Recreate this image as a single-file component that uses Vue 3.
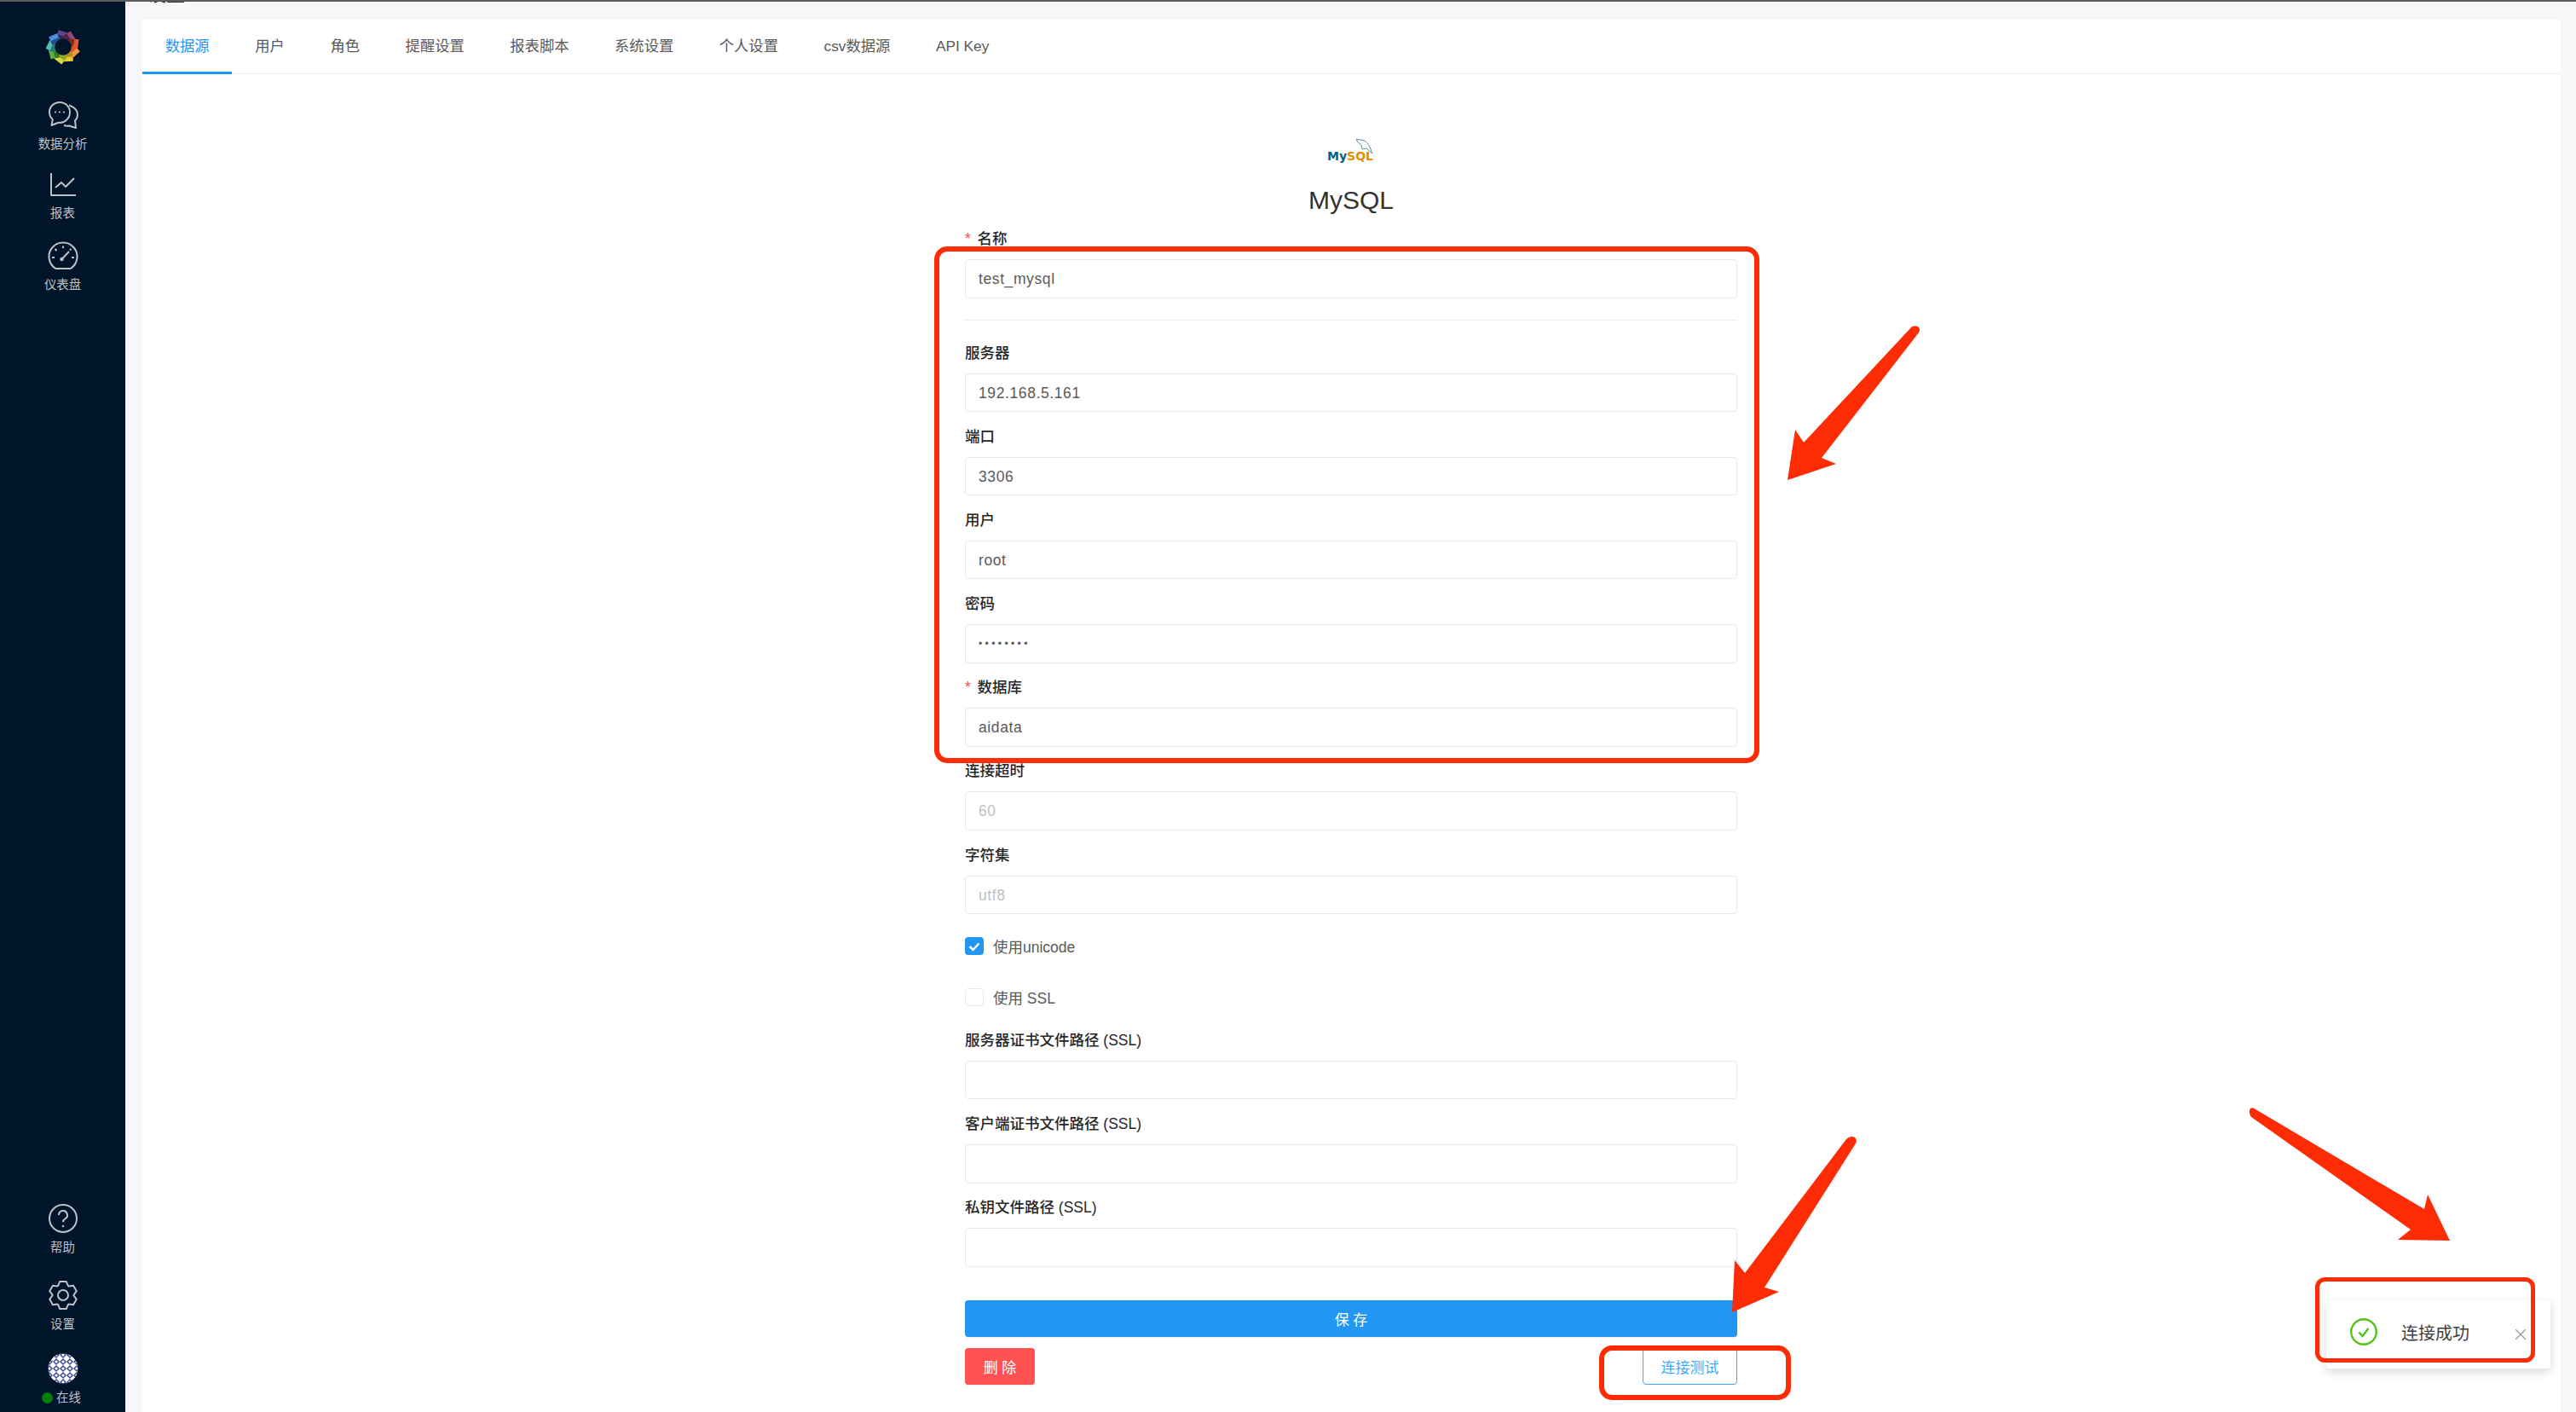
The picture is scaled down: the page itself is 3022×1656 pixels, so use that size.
<template>
  <div class="page">
    <div class="top-strip" />
    <div class="shell">
      <aside class="sidebar">
        <div class="side-group">
          <svg class="brand" viewBox="-26 -26 52 52">
            <g v-for="(p, i) in petals" :key="i" :transform="`rotate(${p.angle})`">
              <path d="M-2.900 -23L8 -17.900L2.900 -7L-8 -12.100Z" :fill="p.color" />
              <path d="M-8 -12.100L2.900 -7L5.500 -12.500L-5.400 -17.500Z" :fill="p.dark" />
            </g>
            <circle class="brand-hole" r="11" />
          </svg>
          <div class="side-item chat">
            <svg class="side-icon" viewBox="0 0 36 36">
              <path d="M14 3C7.400 3 2 8 2 14.500c0 3.500 1.500 6.500 3.800 8.700L4.500 30l8-3.200c.5 0 1 .1 1.500.1 6.600 0 12-5.500 12-12.100C26 8 20.600 3 14 3z" />
              <path d="M25 6.500c5.500 1.500 10 5.500 10 10.500 0 3-.8 5.500-3 7.500L33 33l-8-2.500c-2 .3-3.500.3-6-.5" />
              <circle class="solid" cx="9" cy="14.500" r="1.100" />
              <circle class="solid" cx="14" cy="14.500" r="1.100" />
              <circle class="solid" cx="19" cy="14.500" r="1.100" />
            </svg>
            <span>数据分析</span>
          </div>
          <div class="side-item report">
            <svg class="side-icon" viewBox="0 0 36 36">
              <path d="M4 5V31H33" />
              <path d="M9 22L16 16L21 21L31 11" />
            </svg>
            <span>报表</span>
          </div>
          <div class="side-item gauge">
            <svg class="side-icon" viewBox="0 0 36 36">
              <path d="M9.300 33A16.500 16.500 0 1 1 26.700 33Z" />
              <path d="M18 6.500V9M8.500 10l2 2M5 20h3M28 20h3M27.500 10l-1.500 1.500M16.500 22L25 13" />
              <circle class="solid" cx="16.500" cy="22" r="2.200" />
            </svg>
            <span>仪表盘</span>
          </div>
        </div>

        <div class="side-group">
          <div class="side-item">
            <svg class="side-icon" viewBox="0 0 36 36">
              <circle cx="18" cy="18" r="16" />
              <path d="M13 14a5 5 0 1 1 7.500 4.300c-1.700 1-2.500 2-2.500 4" />
              <circle class="solid" cx="18" cy="27" r="1.300" />
            </svg>
            <span>帮助</span>
          </div>
          <div class="side-item settings">
            <svg class="side-icon" viewBox="0 0 36 36">
              <path :d="gearPath" />
              <circle cx="18" cy="18" r="6" />
            </svg>
            <span>设置</span>
          </div>
          <div class="side-item avatar-item">
            <svg class="side-icon" viewBox="0 0 36 36">
              <defs>
                <pattern id="idPattern" width="8" height="8" patternUnits="userSpaceOnUse" x="2" y="2">
                  <rect class="tile-bg" width="8" height="8" />
                  <path class="tile" d="M4 0L8 4L4 8L0 4Z" />
                  <path class="tile" d="M0 0L2 0L0 2ZM8 0V2L6 0ZM0 8V6L2 8ZM8 8H6L8 6Z" />
                </pattern>
              </defs>
              <circle class="identicon" cx="18" cy="18" r="17.500" fill="url(#idPattern)" />
            </svg>
            <span class="online"><i class="online-dot" />在线</span>
          </div>
        </div>
      </aside>

      <main class="content">
        <div class="page-head"><span>设置</span></div>
        <section class="card">
          <nav class="tabs">
            <a v-for="(t, i) in tabs" :key="t" class="tab" :class="{ active: i === 0 }">{{ t }}</a>
          </nav>

          <div class="form">
            <div class="db-logo">
              <svg class="dolphin" viewBox="0 0 20 19">
                <path d="M0 1L10 3C13 5 16 9 17 13L19 18L12 12L7 13L6 8L2 5Z" />
              </svg>
              <span class="db-word"><b class="my">My</b><b class="sql">SQL</b></span>
            </div>
            <h1 class="title">MySQL</h1>

            <div class="field first">
              <label class="label"><i class="req">*</i>名称</label>
              <div class="input">test_mysql</div>
            </div>
            <div class="divider" />

            <div v-for="f in fields" :key="f.label" class="field">
              <label class="label"><i v-if="f.required" class="req">*</i>{{ f.label }}</label>
              <div class="input" :class="{ muted: f.muted, secret: f.secret }">{{ f.value }}</div>
            </div>

            <div class="check-row first-check">
              <span class="checkbox on">
                <svg viewBox="0 0 22 21"><path d="M5.500 11l4 4 7-7.500" /></svg>
              </span>
              <span>使用unicode</span>
            </div>
            <div class="check-row">
              <span class="checkbox" />
              <span>使用 SSL</span>
            </div>

            <div v-for="f in sslFields" :key="f" class="field ssl">
              <label class="label">{{ f }}</label>
              <div class="input" />
            </div>

            <button class="btn save">保 存</button>
            <div class="btn-row">
              <button class="btn danger">删 除</button>
              <button class="btn ghost">连接测试</button>
            </div>
          </div>
        </section>
      </main>
    </div>

    <div class="toast">
      <svg class="toast-icon" viewBox="0 0 32 32">
        <circle cx="16" cy="16" r="14.800" />
        <path d="M10.500 16.500l4 4.500 7-9" />
      </svg>
      <span class="toast-text">连接成功</span>
      <svg class="toast-close" viewBox="0 0 12 12"><path d="M0 0L12 12M12 0L0 12" /></svg>
    </div>

    <!-- red annotations drawn over the screenshot -->
    <svg class="marks" viewBox="0 0 3022 1656">
      <rect x="1099" y="292" width="962" height="600" rx="12" />
      <rect x="1879" y="1581" width="219" height="58" rx="12" />
      <rect class="thin" x="2718.500" y="1500.500" width="253" height="95" rx="9" />
      <path class="arrow" d="M2243 383Q2248 381 2251 384Q2253 387 2251 390L2137 537L2154 544L2097 563L2106 504L2116 519Z" />
      <path class="arrow" d="M2166 1336Q2171 1331 2176 1334Q2179 1337 2177 1341L2070 1510L2087 1515L2032 1539L2035 1478L2047 1493Z" />
      <path class="arrow" d="M2640 1300Q2643 1298 2646 1301L2844 1418L2848 1401L2874 1455L2813 1454L2828 1442L2641 1310Q2637 1304 2640 1300Z" />
    </svg>
  </div>
</template>

<script setup>
const tabs = ['数据源', '用户', '角色', '提醒设置', '报表脚本', '系统设置', '个人设置', 'csv数据源', 'API Key']

const fields = [
  { label: '服务器', value: '192.168.5.161' },
  { label: '端口', value: '3306' },
  { label: '用户', value: 'root' },
  { label: '密码', value: '••••••••', secret: true },
  { label: '数据库', value: 'aidata', required: true },
  { label: '连接超时', value: '60', muted: true },
  { label: '字符集', value: 'utf8', muted: true },
]

const sslFields = ['服务器证书文件路径 (SSL)', '客户端证书文件路径 (SSL)', '私钥文件路径 (SSL)']

const petals = [
  ['#5b4a8c', '#2f2a55'], ['#93497c', '#4d2244'], ['#e2562f', '#7d2c1c'], ['#f3944a', '#d9551f'],
  ['#efc92f', '#b58f1c'], ['#d3dc3c', '#8aa82a'], ['#62ad3d', '#2f7a2a'], ['#52c0b4', '#2a7a70'],
  ['#4f8fdb', '#244f8c'],
].map(([color, dark], i) => ({ color, dark, angle: i * 40 - 8 }))

// six-lobed gear outline, one tooth pointing straight up
const gearPath = (() => {
  const pt = (r, deg) => {
    const a = (deg * Math.PI) / 180
    return `${(18 + r * Math.cos(a)).toFixed(2)} ${(18 + r * Math.sin(a)).toFixed(2)}`
  }
  let d = ''
  for (let i = 0; i < 6; i++) {
    const c = -90 + i * 60
    d += `${i ? 'L' : 'M'}${pt(12.5, c - 28)}L${pt(16.5, c - 13)}L${pt(16.5, c + 13)}L${pt(12.5, c + 28)}`
  }
  return d + 'Z'
})()
</script>

<style scoped>
.page {
  position: relative;
  width: 3022px;
  height: 1656px;
  overflow: hidden;
  display: flex;
  flex-direction: column;
  background: #f5f7f9;
  font-family: "Liberation Sans", "Noto Sans CJK SC", sans-serif;
}

.top-strip {
  height: 2px;
  flex: none;
  background: #5c5c5c;
}

.shell {
  flex: 1;
  display: flex;
  min-height: 0;
}

.sidebar {
  width: 147px;
  flex: none;
  background: #001529;
  display: flex;
  flex-direction: column;
  justify-content: space-between;
  padding-bottom: 7px;
  color: #bcc1c7;
}

.side-group {
  display: flex;
  flex-direction: column;
  align-items: center;
}

.brand {
  width: 46px;
  height: 46px;
  margin-top: 30px;
}

.brand-hole {
  fill: #001529;
}

.side-item {
  height: 62px;
  width: 100%;
  display: flex;
  flex-direction: column;
  align-items: center;
  gap: 6px;
  font-size: 14.4px;
  line-height: 20px;
}

.side-item.chat { margin-top: 39px; }
.side-item.report { margin-top: 18.5px; }
.side-item.gauge { margin-top: 22.5px; }
.side-item.settings { margin-top: 28px; }
.side-item.avatar-item { margin-top: 24px; }

.side-icon {
  width: 36px;
  height: 36px;
  flex: none;
  fill: none;
  stroke: #bcc1c7;
  stroke-width: 2;
  stroke-linejoin: round;
}

.side-icon .solid {
  fill: #bcc1c7;
  stroke: none;
}

.tile-bg { fill: #3d4a9c; stroke: none; }
.tile { fill: #fff; stroke: none; }
.identicon { stroke: none; }

.online {
  display: flex;
  align-items: center;
  gap: 4px;
  margin-left: -3px;
}

.online-dot {
  width: 13px;
  height: 13px;
  border-radius: 50%;
  background: #008000;
}

.content {
  flex: 1;
  min-width: 0;
  padding: 0 18px 0 20px;
  display: flex;
  flex-direction: column;
}

.page-head {
  height: 21px;
  flex: none;
  overflow: hidden;
  padding-left: 6px;
}

.page-head span {
  display: block;
  margin-top: -23px;
  font-size: 22px;
  line-height: 30px;
  color: #333;
}

.card {
  flex: 1;
  background: #fff;
}

.tabs {
  height: 64px;
  display: flex;
  border-bottom: 1px solid #ececec;
  box-sizing: border-box;
}

.tab {
  padding: 0 26.8px;
  height: 64px;
  box-sizing: border-box;
  line-height: 62px;
  font-size: 17.3px;
  color: #595959;
  white-space: nowrap;
}

.tab.active {
  color: #2196f3;
  border-bottom: 3px solid #2196f3;
}

.form {
  width: 906px;
  margin-left: 965px;
  padding-top: 75px;
  display: flex;
  flex-direction: column;
}

.db-logo {
  position: relative;
  height: 28px;
  width: 56px;
  align-self: center;
}

.dolphin {
  position: absolute;
  left: 34px;
  top: 0;
  width: 20px;
  height: 19px;
  fill: none;
  stroke: #5d8fa8;
  stroke-width: 1;
}

.db-word {
  position: absolute;
  left: 0;
  bottom: 0;
  font-family: "DejaVu Sans", sans-serif;
  font-size: 14px;
  line-height: 14px;
  white-space: nowrap;
}

.my { color: #00618a; font-weight: 700; }
.sql { color: #e48e00; font-weight: 700; }

.title {
  margin: 25px 0 9px;
  font-size: 30px;
  line-height: 40px;
  font-weight: 400;
  text-align: center;
  color: #333;
}

.field {
  margin-bottom: 12.7px;
}

.field.first {
  margin-bottom: 0;
}

.label {
  display: block;
  height: 30px;
  line-height: 32px;
  margin-bottom: 10px;
  font-size: 17.5px;
  font-weight: 500;
  color: #262626;
  white-space: nowrap;
}

.req {
  display: inline-block;
  width: 14.5px;
  font-style: normal;
  font-weight: 400;
  color: #ff4d4f;
}

.input {
  height: 45.5px;
  box-sizing: border-box;
  border: 1.5px solid #e8e8e8;
  border-radius: 4px;
  padding: 0 15px;
  line-height: 44px;
  font-size: 17.5px;
  letter-spacing: 0.6px;
  color: #595959;
}

.input.muted {
  color: #bfbfbf;
}

.input.secret {
  font-size: 12px;
  letter-spacing: 3.4px;
}

.divider {
  height: 1px;
  margin: 25px 0 22px;
  background: #ececec;
}

.check-row {
  height: 30px;
  display: flex;
  align-items: center;
  gap: 11px;
  font-size: 17.5px;
  color: #595959;
  margin-top: 30px;
}

.check-row.first-check {
  margin-top: 9.6px;
}

.check-row + .ssl {
  margin-top: 19.5px;
}

.checkbox {
  width: 22px;
  height: 21px;
  box-sizing: border-box;
  border: 1.5px solid #e8e8e8;
  border-radius: 4px;
  display: flex;
}

.checkbox.on {
  background: #2196f3;
  border: none;
}

.checkbox svg {
  width: 22px;
  height: 21px;
  fill: none;
  stroke: #fff;
  stroke-width: 2.5;
}

.btn {
  height: 43px;
  padding: 0;
  border-radius: 4px;
  border: none;
  font-family: inherit;
  font-size: 17px;
  cursor: pointer;
  color: #fff;
}

.btn.save {
  margin-top: 27px;
  width: 100%;
  background: #2196f3;
  box-shadow: 0 2px 0 rgba(0, 0, 0, 0.045);
}

.btn-row {
  margin-top: 13px;
  display: flex;
  justify-content: space-between;
}

.btn.danger {
  width: 82px;
  background: #ff5252;
  box-shadow: 0 2px 0 rgba(0, 0, 0, 0.045);
}

.btn.ghost {
  width: 111px;
  background: #fff;
  border: 1px solid #40a9ff;
  color: #40a9ff;
}

.toast {
  position: absolute;
  left: 2729px;
  top: 1525px;
  width: 263px;
  height: 80px;
  box-sizing: border-box;
  padding: 0 0 6px 28px;
  display: flex;
  align-items: center;
  background: #fff;
  border-radius: 4px;
  box-shadow: 0 4px 12px rgba(0, 0, 0, 0.15);
}

.toast-icon {
  width: 32px;
  height: 32px;
  flex: none;
  fill: none;
  stroke: #52c41a;
  stroke-width: 2.4;
}

.toast-text {
  margin-left: 28px;
  font-size: 20px;
  color: #404040;
}

.toast-close {
  position: absolute;
  right: 29px;
  top: 34px;
  width: 12px;
  height: 12px;
  fill: none;
  stroke: #999;
  stroke-width: 1.3;
}

.marks {
  position: absolute;
  left: 0;
  top: 0;
  width: 3022px;
  height: 1656px;
  pointer-events: none;
  fill: none;
  stroke: #fe2c05;
  stroke-width: 6;
}

.marks .thin {
  stroke-width: 5;
}

.marks .arrow {
  fill: #fe2c05;
  stroke: none;
}
</style>

<style>
html, body { margin: 0; background: #f5f7f9; }
</style>
